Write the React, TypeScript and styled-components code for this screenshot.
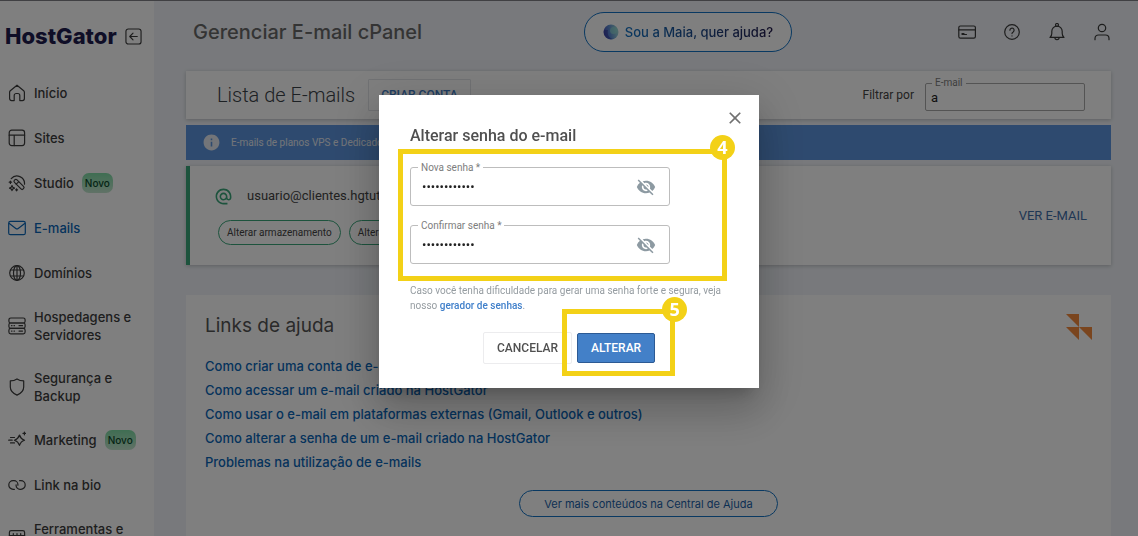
import React, { useId, useState } from "react";
import styled, { createGlobalStyle, css } from "styled-components";
import { MdVisibilityOff, MdVisibility, MdInfo, MdClose, MdAlternateEmail } from "react-icons/md";

const brand = `Inter, "Liberation Sans", sans-serif`;
const roboto = `Roboto, "Liberation Sans", sans-serif`;

const GlobalStyle = createGlobalStyle`
  *, *::before, *::after { box-sizing: border-box; }
  body { margin: 0; background: #f0f3f8; font-family: ${roboto}; color: #444; }
  h1, h2, p, ul { margin: 0; padding: 0; }
  button, input { font-family: inherit; margin: 0; }
  button { cursor: pointer; }
  a { text-decoration: none; }
`;

const Shell = styled.div`
  display: flex;
  height: 100vh;
  overflow: hidden;
  border-top: 1px solid #808086;
`;

const Sidebar = styled.aside`
  flex: 0 0 154px;
  background: #fff;
  font-family: ${brand};
`;

const SidebarHead = styled.div`
  display: flex;
  align-items: center;
  gap: 7px;
  height: 70px;
  padding-left: 5px;
`;

const Logo = styled.span`
  width: 113px;
  font-size: 22px;
  line-height: 24px;
  font-weight: 800;
  color: #1f1c4f;
`;

const IconButton = styled.button`
  display: flex;
  align-items: center;
  justify-content: center;
  padding: 0;
  border: 0;
  background: none;
  color: #3a3a3a;
`;

const NavLink = styled.a<{ $active?: boolean }>`
  display: flex;
  align-items: center;
  gap: 8px;
  min-height: 45px;
  padding: 12px 0 13px 8px;
  font-size: 13px;
  line-height: 18px;
  font-weight: 500;
  color: ${(p) => (p.$active ? "#0a66b8" : "#3c3c3c")};
  svg { flex: none; }
`;

const NavText = styled.span<{ $wrap?: boolean }>`
  ${(p) => p.$wrap && css`max-width: 102px;`}
`;

const Pill = styled.span`
  padding: 0 3px;
  border-radius: 7px;
  background: linear-gradient(#7fdca6, #c2e4cd);
  color: #0c4a2c;
  font-size: 10px;
  line-height: 20px;
  font-weight: 500;
`;

const Main = styled.main`
  flex: 1;
  min-width: 0;
  padding: 0 27px 0 32px;
`;

const Header = styled.header`
  display: grid;
  grid-template-columns: 391px 208px 1fr;
  align-items: center;
  height: 70px;
  padding: 0 0 8px 7px;
`;

const PageTitle = styled.h1`
  font: 500 20px/24px ${brand};
  color: #696969;
`;

const MaiaButton = styled.button`
  display: flex;
  align-items: center;
  justify-content: center;
  gap: 6px;
  height: 40px;
  border: 1px solid #1272c4;
  border-radius: 20px;
  background: #fff;
  font: 500 13px/20px ${brand};
`;

const MaiaText = styled.span`
  background: linear-gradient(90deg, #1272c4, #241c4c);
  background-clip: text;
  color: transparent;
`;

const HeaderIcons = styled.div`
  display: flex;
  justify-content: flex-end;
  gap: 27px;
`;

const Card = styled.section`
  background: #fff;
  box-shadow: 0 1px 4px rgba(0, 0, 0, 0.22);
`;

const FilterCard = styled(Card)`
  display: flex;
  align-items: center;
  height: 48px;
  padding: 0 26px 0 31px;
`;

const ListTitle = styled.h2`
  font: 300 20px/24px ${roboto};
  color: #3a4248;
`;

const OutlineButton = styled.button`
  height: 32px;
  margin: 0 auto 0 13px;
  padding: 0 12px;
  border: 1px solid #e2e4e8;
  border-radius: 1px;
  background: #fff;
  color: #3f7cc4;
  font-size: 12px;
  font-weight: 500;
`;

const FilterLabel = styled.span`
  margin-right: 11px;
  font-size: 12px;
  line-height: 16px;
`;

const Field = styled.div`
  position: relative;
  display: flex;
  align-items: center;
`;

const FilterField = styled(Field)`
  margin-top: 4px;
`;

const FieldLabel = styled.label`
  position: absolute;
  top: -6px;
  left: 7px;
  padding: 0 3px;
  background: #fff;
  color: #7d7d7d;
  font-size: 10px;
  line-height: 12px;
`;

const FilterInput = styled.input`
  width: 160px;
  height: 28px;
  padding: 0 5px;
  border: 1px solid #a8a8a8;
  border-radius: 2px;
  background: #fff;
  color: #222;
  font-size: 13px;
`;

const Notice = styled.div`
  display: flex;
  align-items: center;
  gap: 10px;
  height: 35px;
  margin: 6px 0;
  padding-left: 16px;
  background: #5d95de;
  color: #e6ebf2;
  font-size: 10px;
`;

const AccountCard = styled(Card)`
  display: flex;
  align-items: center;
  justify-content: space-between;
  height: 99px;
  padding: 0 24px 0 28px;
  border-left: 4px solid #3aa77b;
`;

const Account = styled.div`
  display: flex;
  flex-direction: column;
  gap: 14px;
`;

const Address = styled.div`
  display: flex;
  align-items: center;
  gap: 14px;
  font-size: 13px;
  line-height: 18px;
  color: #444;
  svg { color: #3aa77b; margin-left: -4px; }
`;

const Chips = styled.div`
  display: flex;
  gap: 8px;
`;

const Chip = styled.button`
  height: 25px;
  padding: 0 8px;
  border: 1px solid #3aa77b;
  border-radius: 13px;
  background: #fff;
  color: #444;
  font-size: 10px;
`;

const AccountLink = styled.a`
  color: #3f6ea8;
  font-size: 13px;
`;

const HelpCard = styled.section`
  display: flex;
  flex-direction: column;
  height: 280px;
  margin-top: 30px;
  padding: 19px 19px 0;
  background: #fff;
  font-family: ${brand};
`;

const HelpHead = styled.div`
  display: flex;
  justify-content: space-between;
  align-items: flex-start;
  height: 40px;
`;

const HelpTitle = styled.h2`
  font: 400 19px/24px ${brand};
  color: #555;
`;

const HelpLinks = styled.ul`
  list-style: none;
  font-size: 13px;
  line-height: 24px;
  font-weight: 500;
  a { color: #0a66b8; }
`;

const MoreButton = styled.button`
  align-self: center;
  width: 259px;
  height: 27px;
  margin-top: 16px;
  border: 1px solid #1272c4;
  border-radius: 14px;
  background: #fff;
  color: #1a5fa8;
  font-size: 11px;
`;

const Overlay = styled.div`
  position: fixed;
  inset: 0;
  display: flex;
  align-items: flex-start;
  justify-content: center;
  padding-top: 95px;
  background: rgba(0, 0, 0, 0.5);
`;

const Dialog = styled.form`
  width: 380px;
  padding: 15px 15px 24px 31px;
  background: #fff;
  box-shadow: 0 11px 15px -7px rgba(0, 0, 0, 0.2), 0 24px 38px 3px rgba(0, 0, 0, 0.14),
    0 9px 46px 8px rgba(0, 0, 0, 0.12);
`;

const CloseRow = styled.div`
  display: flex;
  justify-content: flex-end;
  height: 16px;
  margin-right: -1px;
`;

const DialogTitle = styled.h2`
  font: 500 16px/20px ${roboto};
  color: #505050;
`;

const Marked = styled.div`
  position: relative;
`;

const FieldGroup = styled(Marked)`
  display: flex;
  flex-direction: column;
  gap: 19px;
  margin-top: 21px;
`;

const PasswordField = styled(Field)`
  width: 260px;
  height: 39px;
  border: 1px solid #bdbdbd;
  border-radius: 3px;
`;

const PasswordInput = styled.input`
  flex: 1;
  min-width: 0;
  padding: 0 0 0 11px;
  border: 0;
  outline: 0;
  background: none;
  color: #222;
  font-size: 13px;
`;

const EyeButton = styled(IconButton)`
  margin-right: 13px;
  color: #8d9aa2;
`;

const CloseButton = styled(IconButton)`
  color: #707070;
`;

const Hint = styled.p`
  margin-top: 19px;
  color: #959ca1;
  font-size: 10px;
  line-height: 15px;
  a { color: #3f7fca; font-weight: 500; }
`;

const Actions = styled.div`
  display: flex;
  align-items: center;
  gap: 5px;
  margin: 19px 0 0 73px;
`;

const ActionButton = styled.button<{ $primary?: boolean }>`
  display: block;
  height: ${(p) => (p.$primary ? 30 : 32)}px;
  padding: 0 13px;
  border: 1px solid ${(p) => (p.$primary ? "#2c5a94" : "#ececee")};
  border-radius: 2px;
  background: ${(p) => (p.$primary ? "#4380c8" : "#fff")};
  color: ${(p) => (p.$primary ? "#fff" : "#505050")};
  font-size: 12px;
  font-weight: 500;
`;

const Highlight = styled.div<{ $inset: string }>`
  position: absolute;
  inset: ${(p) => p.$inset};
  border: 5px solid #f3d117;
  pointer-events: none;
`;

const StepBadge = styled.span<{ $top: number; $right: number }>`
  position: absolute;
  top: ${(p) => p.$top}px;
  right: ${(p) => p.$right}px;
  width: 25px;
  height: 25px;
  border-radius: 50%;
  background: #f3d117;
  color: #fff;
  font: 700 18px/24px "Open Sans", sans-serif;
  text-align: center;
`;

const Line = ({ size = 18, children }: { size?: number; children: React.ReactNode }) => (
  <svg width={size} height={size} viewBox="0 0 18 18" fill="none" stroke="currentColor"
    strokeWidth="1.2" strokeLinecap="round" strokeLinejoin="round" aria-hidden="true">
    {children}
  </svg>
);

const icons = {
  home: <path d="M1.600 8.200a2 2 0 0 1 .7-1.500L9 1.200l6.700 5.500a2 2 0 0 1 .7 1.500v6.400a2 2 0 0 1-2 2h-2.600V11.500a2 2 0 0 0-2-2H8.200a2 2 0 0 0-2 2v5.100H3.600a2 2 0 0 1-2-2z" />,
  sites: <><rect x="1.200" y="1.200" width="15.400" height="15.400" rx="2.500" /><path d="M1.200 6.200h15.400M6.200 6.200v10.400" /></>,
  studio: <>
    <path d="M3.200 4.600a7.600 7.600 0 0 1 13.300 5.600" />
    <rect x="4.800" y="8.600" width="12.400" height="3.600" rx="1.600" transform="rotate(45 11 10.400)" />
    <path d="m8.200 10.200 2.400-2.400" />
    <path d="m4 11.600.8 1.700 1.700.8-1.700.8-.8 1.700-.8-1.700-1.700-.8 1.700-.8zM1.200 8.200h2.400M2.400 7v2.400M8.600 14.800v2M7.600 15.800h2" />
  </>,
  mail: <><rect x=".7" y="2.300" width="16.600" height="13.400" rx="1.800" /><path d="m1.300 4.500 6.500 5a2 2 0 0 0 2.400 0l6.500-5" /></>,
  globe: <><circle cx="9" cy="9" r="7.300" /><ellipse cx="9" cy="9" rx="3.500" ry="7.300" /><path d="M9 1.700v14.600M2.600 6h12.800M2.600 12h12.800" /></>,
  server: <><rect x=".9" y="1" width="16.200" height="5" rx="1.800" /><rect x=".9" y="6" width="16.200" height="5.400" rx="1.800" /><rect x=".9" y="11.400" width="16.200" height="5.400" rx="1.800" /><path d="M3.500 8.700h.5M6 8.700h.5M11 8.700h3.500M3.500 14.100h.5M6 14.100h.5M11 14.100h3.500" /></>,
  shield: <path d="M9 .9c2 1.400 4.200 2 6.700 2v6c0 3.600-2.500 6.300-6.700 8.200-4.200-1.900-6.700-4.600-6.700-8.200v-6c2.500 0 4.700-.6 6.700-2z" />,
  spark: <><path d="M11.500 4c.8 2.800 2.200 4.200 5 5.200-2.800.9-4.200 2.300-5 5.200-.9-2.900-2.300-4.300-5.100-5.200 2.800-1 4.200-2.400 5.100-5.200zM2.500 6.500h4M.7 9.200h3.500M2.500 11.900h4M16.400 1v2.800M15 2.400h2.800" /></>,
  link: <><path d="M6.400 13.300H5.100a4.300 4.300 0 0 1 0-8.600h.9a3.900 3.900 0 0 1 3.900 3.900v.6" /><path d="M11.600 4.700h1.300a4.300 4.300 0 0 1 0 8.600H12a3.900 3.900 0 0 1-3.900-3.900v-.6" /></>,
  tools: <><rect x="1.400" y="1.600" width="15.200" height="14.600" rx="1.800" /><path d="M1.400 6.600h15.200M5.300 4.500v4M9 4.500v4M12.700 4.500v4" /></>,
  collapse: <><rect x="1" y="1" width="16" height="16" rx="2.500" /><path d="M13 9H5M8.500 5.500 5 9l3.500 3.500" /></>,
  card: <><rect x=".8" y="3" width="16.600" height="12.200" rx="1.600" /><path d="M.8 6.900h16.600M4 11.500h4.500M4 10.500h2" /></>,
  help: <><circle cx="9" cy="9" r="7.300" /><path d="M6.900 7.200a2.100 2.100 0 1 1 3.300 1.700c-.8.500-1.200.9-1.200 1.700M9 12.900v.1" /></>,
  bell: <><circle cx="9" cy="2" r="1.500" /><path d="M2 14.400c1.300-1 1.800-2.300 1.800-4.200V8.300a5.200 5.200 0 0 1 10.400 0v1.900c0 1.900.5 3.200 1.800 4.200zM6.900 14.600a2.100 2.100 0 0 0 4.200 0" /></>,
  user: <><circle cx="9" cy="5" r="3.700" /><path d="M2 16.700v-1.200a3.500 3.500 0 0 1 3.500-3.500h7a3.500 3.500 0 0 1 3.500 3.500v1.200" /></>,
};

type IconName = keyof typeof icons;

const navItems: { label: string; icon: IconName; badge?: string; active?: boolean; wrap?: boolean }[] = [
  { label: "Início", icon: "home" },
  { label: "Sites", icon: "sites" },
  { label: "Studio", icon: "studio", badge: "Novo" },
  { label: "E-mails", icon: "mail", active: true },
  { label: "Domínios", icon: "globe" },
  { label: "Hospedagens e Servidores", icon: "server", wrap: true },
  { label: "Segurança e Backup", icon: "shield", wrap: true },
  { label: "Marketing", icon: "spark", badge: "Novo" },
  { label: "Link na bio", icon: "link" },
  { label: "Ferramentas e Recursos", icon: "tools", wrap: true },
];

const headerItems: { label: string; icon: IconName }[] = [
  { label: "Pagamentos", icon: "card" },
  { label: "Ajuda", icon: "help" },
  { label: "Notificações", icon: "bell" },
  { label: "Perfil", icon: "user" },
];

const helpLinks = [
  "Como criar uma conta de e-mail",
  "Como acessar um e-mail criado na HostGator",
  "Como usar o e-mail em plataformas externas (Gmail, Outlook e outros)",
  "Como alterar a senha de um e-mail criado na HostGator",
  "Problemas na utilização de e-mails",
];

function MaiaOrb() {
  return (
    <svg width="16" height="16" viewBox="0 0 16 16" aria-hidden="true">
      <defs>
        <linearGradient id="orb" x1="0" x2="1" y1=".6" y2=".4">
          <stop offset="0" stopColor="#4a50b4" />
          <stop offset=".4" stopColor="#5a88d0" />
          <stop offset="1" stopColor="#a0dcd6" />
        </linearGradient>
      </defs>
      <circle cx="8" cy="8" r="7.500" fill="url(#orb)" />
      <circle cx="10.500" cy="6.500" r="3.500" fill="#8fdcd0" opacity=".6" />
      <path d="M1 6a7.500 7.500 0 0 0 9 9C6 14 4 11 5 6z" fill="#2b2f92" opacity=".5" />
    </svg>
  );
}

function Password({ label }: { label: string }) {
  const id = useId();
  const [shown, setShown] = useState(false);
  return (
    <PasswordField>
      <FieldLabel htmlFor={id}>{label}</FieldLabel>
      <PasswordInput id={id} type={shown ? "text" : "password"} defaultValue="senha1234567" />
      <EyeButton type="button" aria-label="Mostrar senha" onClick={() => setShown(!shown)}>
        {shown ? <MdVisibility size={20} /> : <MdVisibilityOff size={20} />}
      </EyeButton>
    </PasswordField>
  );
}

export default function App() {
  return (
    <>
      <GlobalStyle />
      <Shell>
        <Sidebar>
          <SidebarHead>
            <Logo>HostGator</Logo>
            <IconButton aria-label="Recolher menu"><Line size={17}>{icons.collapse}</Line></IconButton>
          </SidebarHead>
          <nav>
            {navItems.map((n) => (
              <NavLink key={n.label} href="#" $active={n.active}>
                <Line>{icons[n.icon]}</Line>
                <NavText $wrap={n.wrap}>{n.label}</NavText>
                {n.badge && <Pill>{n.badge}</Pill>}
              </NavLink>
            ))}
          </nav>
        </Sidebar>
        <Main>
          <Header>
            <PageTitle>Gerenciar E-mail cPanel</PageTitle>
            <MaiaButton><MaiaOrb /><MaiaText>Sou a Maia, quer ajuda?</MaiaText></MaiaButton>
            <HeaderIcons>
              {headerItems.map((h) => (
                <IconButton key={h.label} aria-label={h.label}><Line>{icons[h.icon]}</Line></IconButton>
              ))}
            </HeaderIcons>
          </Header>
          <FilterCard>
            <ListTitle>Lista de E-mails</ListTitle>
            <OutlineButton>CRIAR CONTA</OutlineButton>
            <FilterLabel>Filtrar por</FilterLabel>
            <FilterField>
              <FilterInput id="filter" defaultValue="a" />
              <FieldLabel htmlFor="filter">E-mail</FieldLabel>
            </FilterField>
          </FilterCard>
          <Notice><MdInfo size={19} />E-mails de planos VPS e Dedicado</Notice>
          <AccountCard>
            <Account>
              <Address><MdAlternateEmail size={19} />usuario@clientes.hgtut</Address>
              <Chips>
                <Chip>Alterar armazenamento</Chip>
                <Chip>Alterar senha</Chip>
              </Chips>
            </Account>
            <AccountLink href="#">VER E-MAIL</AccountLink>
          </AccountCard>
          <HelpCard>
            <HelpHead>
              <HelpTitle>Links de ajuda</HelpTitle>
              <svg width="26" height="26" viewBox="0 0 26 26" fill="#f58a3c" aria-hidden="true">
                <path d="M0 0h13v13zM0 13h13v13zM13 13h13v13z" />
              </svg>
            </HelpHead>
            <HelpLinks>
              {helpLinks.map((l) => <li key={l}><a href="#">{l}</a></li>)}
            </HelpLinks>
            <MoreButton>Ver mais conteúdos na Central de Ajuda</MoreButton>
          </HelpCard>
        </Main>
      </Shell>
      <Overlay>
        <Dialog role="dialog" aria-labelledby="dialog-title" onSubmit={(e) => e.preventDefault()}>
          <CloseRow><CloseButton type="button" aria-label="Fechar"><MdClose size={20} /></CloseButton></CloseRow>
          <DialogTitle id="dialog-title">Alterar senha do e-mail</DialogTitle>
          <FieldGroup>
            <Password label="Nova senha *" />
            <Password label="Confirmar senha *" />
            <Highlight $inset="-18px 17px -17px -12px"><StepBadge $top={-19} $right={-13}>4</StepBadge></Highlight>
          </FieldGroup>
          <Hint>
            Caso você tenha dificuldade para gerar uma senha forte e segura, veja nosso <a href="#">gerador de senhas</a>.
          </Hint>
          <Actions>
            <ActionButton type="button">CANCELAR</ActionButton>
            <Marked>
              <ActionButton $primary type="submit">ALTERAR</ActionButton>
              <Highlight $inset="-24px -20px -13px -15px"><StepBadge $top={-17} $right={-17}>5</StepBadge></Highlight>
            </Marked>
          </Actions>
        </Dialog>
      </Overlay>
    </>
  );
}
